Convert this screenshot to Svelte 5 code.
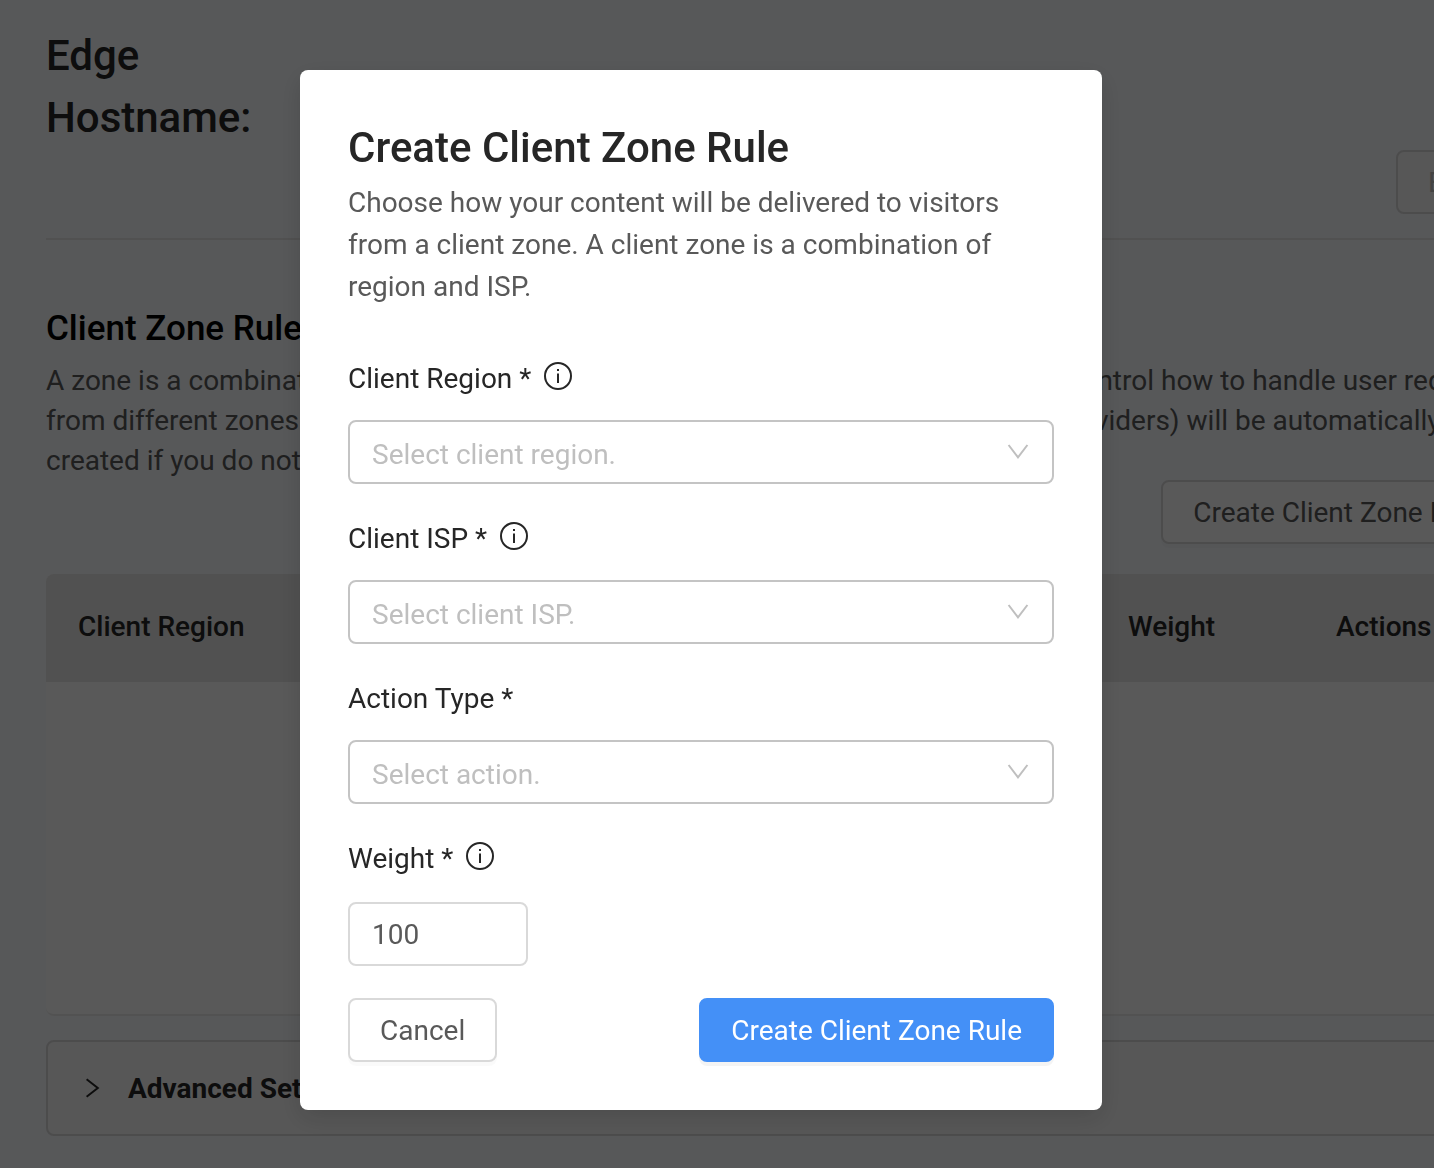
<script>
  const fields = [
    { id: 'region', label: 'Client Region *', placeholder: 'Select client region.', info: true },
    { id: 'isp', label: 'Client ISP *', placeholder: 'Select client ISP.', info: true },
    { id: 'action', label: 'Action Type *', placeholder: 'Select action.', info: false }
  ];
  let weight = $state('100');
</script>

{#snippet infoIcon()}
  <svg class="info" viewBox="0 0 28 28" aria-hidden="true">
    <circle cx="14" cy="14" r="13" fill="none" stroke="currentColor" stroke-width="2" />
    <path d="M13 11.6h2v9.4h-2zM13 7h2v2h-2z" fill="currentColor" />
  </svg>
{/snippet}

<div class="page">
  <main>
    <header>
      <h1>Edge Hostname:</h1>
      <button class="btn disabled" disabled>Edit</button>
    </header>

    <section>
      <h2>Client Zone Rules</h2>
      <p>
        A zone is a combination of a client region and an ISP. You can create zone rules to control how to handle user requests
        from different zones. Default rules (both for all client regions and internet service providers) will be automatically
        created if you do not create any rules.
      </p>
      <button class="btn create">Create Client Zone Rule</button>
      <table>
        <colgroup>
          <col /><col /><col /><col class="weight-col" /><col class="actions-col" />
        </colgroup>
        <thead>
          <tr><th>Client Region</th><th>Client ISP</th><th>Action</th><th>Weight</th><th>Actions</th></tr>
        </thead>
        <tbody>
          <tr><td colspan="5"></td></tr>
        </tbody>
      </table>
    </section>

    <button class="advanced">
      <svg viewBox="0 0 14 20" aria-hidden="true">
        <path d="M.6 1.2 11.8 10 .6 18.8" fill="none" stroke="currentColor" stroke-width="2" />
      </svg>
      Advanced Settings
    </button>
  </main>
</div>

<div class="overlay">
  <div class="modal" role="dialog" aria-modal="true" aria-labelledby="modal-title">
    <h3 id="modal-title">Create Client Zone Rule</h3>
    <p>Choose how your content will be delivered to visitors from a client zone. A client zone is a combination of region and ISP.</p>
    <form>
      {#each fields as field}
        <div class="field">
          <label for={field.id}>{field.label}{#if field.info}{@render infoIcon()}{/if}</label>
          <div class="select">
            <select id={field.id}>
              <option value="">{field.placeholder}</option>
            </select>
            <svg viewBox="0 0 22 16" aria-hidden="true">
              <path d="M1.6 1 11 13.4 20.4 1" fill="none" stroke="currentColor" stroke-width="2" />
            </svg>
          </div>
        </div>
      {/each}
      <div class="field">
        <label for="weight">Weight *{@render infoIcon()}</label>
        <input id="weight" type="text" inputmode="numeric" bind:value={weight} />
      </div>
      <div class="actions">
        <button type="button" class="btn">Cancel</button>
        <button type="button" class="btn primary">Create Client Zone Rule</button>
      </div>
    </form>
  </div>
</div>

<style>
  :global(body) {
    background: #f8fbff;
    font-family: Roboto, 'Liberation Sans', sans-serif;
    font-size: 28px;
    color: #262626;
  }
  :global(*) {
    box-sizing: border-box;
  }
  h1, h2, h3, p {
    margin: 0;
  }
  button, input, select {
    font: inherit;
  }
  .page {
    min-height: 100vh;
    padding: 25px 0 32px 46px;
    overflow: hidden;
  }
  /* The content is wider than the window and runs past its right edge. */
  main {
    width: calc(100% + 82px);
  }
  header {
    display: flex;
    flex-direction: column;
    gap: 1px;
    padding-bottom: 24px;
    border-bottom: 2px solid #e8e8e8;
  }
  h1 {
    width: 240px;
    font-size: 42px;
    line-height: 62px;
    font-weight: 500;
  }
  .btn {
    height: 64px;
    padding: 0 30px;
    border: 2px solid #d9d9d9;
    border-radius: 8px;
    background: #fff;
    color: #595959;
    white-space: nowrap;
    box-shadow: 0 4px 0 rgba(0, 0, 0, 0.02);
  }
  .btn.disabled {
    align-self: flex-end;
    width: 120px;
    background: #f9f9f9;
    color: #bfbfbf;
    text-align: left;
    box-shadow: none;
  }
  section {
    display: flex;
    flex-direction: column;
    padding-top: 61px;
  }
  h2 {
    margin-bottom: 4px;
    color: #000;
    font-size: 35px;
    line-height: 56px;
    font-weight: 500;
  }
  section p {
    color: #595959;
    line-height: 40px;
  }
  .create {
    align-self: flex-end;
    margin: -1px 0 30px;
  }
  table {
    width: 100%;
    table-layout: fixed;
    border-collapse: separate;
    border-spacing: 0;
    background: #fff;
    border-radius: 8px;
  }
  .weight-col {
    width: 208px;
  }
  .actions-col {
    width: 212px;
  }
  th {
    height: 108px;
    padding: 0 32px 4px;
    background: #e8e8e8;
    font-weight: 500;
    text-align: left;
  }
  th:first-child {
    border-top-left-radius: 8px;
  }
  td {
    height: 334px;
    border-bottom: 2px solid #ececec;
    border-radius: 0 0 8px 8px;
  }
  .advanced {
    display: flex;
    align-items: center;
    gap: 28px;
    width: 100%;
    height: 96px;
    margin-top: 24px;
    padding: 0 38px;
    border: 2px solid #d9d9d9;
    border-radius: 8px;
    background: #fafafa;
    color: #262626;
    font-weight: 700;
    white-space: nowrap;
  }
  .advanced svg {
    width: 14px;
    height: 20px;
  }
  .overlay {
    position: fixed;
    inset: 0;
    padding: 70px 32px 58px 0;
    overflow: auto;
    background: rgba(0, 0, 0, 0.65);
  }
  .modal {
    max-width: 802px;
    margin: 0 auto;
    padding: 48px;
    border-radius: 8px;
    background: #fff;
    box-shadow: 0 8px 24px rgba(0, 0, 0, 0.15);
  }
  h3 {
    margin-bottom: 4px;
    font-size: 42px;
    line-height: 60px;
    font-weight: 500;
  }
  .modal p {
    color: #595959;
    line-height: 42px;
  }
  form {
    display: flex;
    flex-direction: column;
    gap: 32px;
    padding-top: 48px;
  }
  .field {
    display: flex;
    flex-direction: column;
    align-items: flex-start;
    gap: 18px;
  }
  label {
    display: flex;
    align-items: center;
    gap: 13px;
    line-height: 46px;
  }
  .info {
    width: 28px;
    height: 28px;
    margin-bottom: 6px;
  }
  .select {
    display: grid;
    align-items: center;
    width: 100%;
  }
  .select > * {
    grid-area: 1 / 1;
  }
  select {
    appearance: none;
    width: 100%;
    height: 64px;
    padding: 4px 60px 0 22px;
    border: 2px solid #c4c4c4;
    border-radius: 8px;
    background: #fff;
    color: #bfbfbf;
  }
  .select svg {
    justify-self: end;
    width: 22px;
    height: 16px;
    margin-right: 25px;
    color: #bfbfbf;
    pointer-events: none;
  }
  input {
    width: 180px;
    height: 64px;
    margin-top: 2px;
    padding: 0 22px;
    border: 2px solid #d9d9d9;
    border-radius: 8px;
    background: #fff;
    color: #595959;
  }
  .actions {
    display: flex;
    justify-content: space-between;
  }
  .primary {
    border-color: #4490f7;
    background: #4490f7;
    color: #fff;
    box-shadow: 0 4px 0 rgba(0, 0, 0, 0.045);
  }
</style>
